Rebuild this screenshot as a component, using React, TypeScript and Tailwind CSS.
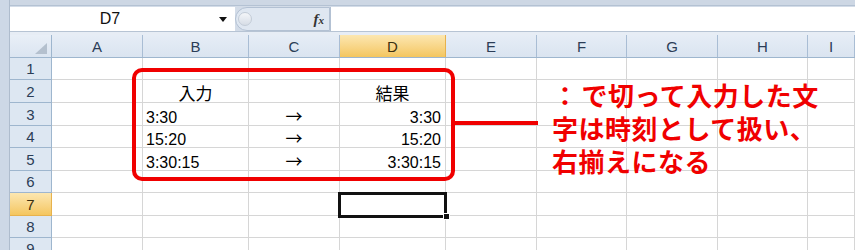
const columns = [
  { name: "A", width: "w-[91px]" },
  { name: "B", width: "w-[106px]" },
  { name: "C", width: "w-[91px]" },
  { name: "D", width: "w-[106px]" },
  { name: "E", width: "w-[91px]" },
  { name: "F", width: "w-[90px]" },
  { name: "G", width: "w-[91px]" },
  { name: "H", width: "w-[90px]" },
  { name: "I", width: "w-[47px]" },
];

const rowHeights = ["h-[22px]", "h-[23px]", "h-[23px]", "h-[22px]", "h-[23px]", "h-[22px]", "h-[23px]", "h-[22px]", "h-[22px]"];

type Cell = { text: string; align: "left" | "center" | "right"; cjk?: boolean };

const cells: Record<string, Cell> = {
  B2: { text: "入力", align: "center", cjk: true },
  D2: { text: "結果", align: "center", cjk: true },
  B3: { text: "3:30", align: "left" },
  C3: { text: "→", align: "center", cjk: true },
  D3: { text: "3:30", align: "right" },
  B4: { text: "15:20", align: "left" },
  C4: { text: "→", align: "center", cjk: true },
  D4: { text: "15:20", align: "right" },
  B5: { text: "3:30:15", align: "left" },
  C5: { text: "→", align: "center", cjk: true },
  D5: { text: "3:30:15", align: "right" },
};

const alignClass = {
  left: "justify-start pl-[3px]",
  center: "justify-center",
  right: "justify-end pr-[4px]",
};

const FormulaBar = () => (
  <div className="flex h-[25px] shrink-0 bg-[#d3dce8]">
    <div className="mt-[1px] flex h-[24px] w-[225px] items-center bg-white">
      <span className="w-[200px] text-center text-[16px] leading-none text-[#111]">D7</span>
      <svg width="8" height="5" viewBox="0 0 8 5" className="ml-[9px]">
        <polygon points="0,0 8,0 4,5" fill="#111" />
      </svg>
    </div>
    <div className="mt-[1px] flex h-[24px] w-[95px] items-center rounded-l-full border border-[#b3c1d3] bg-[#dfe7f1]">
      <div className="ml-[2px] h-[14px] w-[14px] rounded-full border border-[#c3ccd7] bg-gradient-to-b from-[#f4f6f9] to-[#d6dde6]" />
      <span className="ml-auto mr-[5px] font-['Liberation_Serif',serif] text-[15px] font-bold italic leading-none text-[#333]">
        f<span className="text-[11px]">x</span>
      </span>
    </div>
    <div className="mt-[1px] h-[24px] flex-1 border-l border-[#b3c1d3] bg-white" />
  </div>
);

const App = () => {
  return (
    <div className="relative flex h-[250px] w-[855px] overflow-hidden bg-white font-['Liberation_Sans','Noto_Sans_CJK_JP',sans-serif]">
      <div className="w-[10px] shrink-0 border-r border-[#aebccd] bg-[#cdd8e6]" />

      <div className="flex flex-1 flex-col">
        <div className="h-[6px] shrink-0 border-b border-[#b4c2d3] bg-[#cdd7e4]" />
        <FormulaBar />
        <div className="h-[4px] shrink-0 border-t border-[#b7c4d4] bg-[#e7edf5]" />

        <div className="flex h-[23px] shrink-0 border-b border-[#9eb6ce]">
          <div className="flex w-[42px] items-end justify-end border-r border-[#9eb6ce] bg-gradient-to-b from-[#e9eff7] to-[#dbe5f1] pb-[3px] pr-[4px]">
            <svg width="12" height="11" viewBox="0 0 12 11">
              <polygon points="12,0 12,11 0,11" fill="#b4c0ce" />
            </svg>
          </div>
          {columns.map((col) => (
            <div
              key={col.name}
              className={`${col.width} flex items-center justify-center border-r text-[15px] leading-none ${
                col.name === "D"
                  ? "border-[#e7b24d] bg-gradient-to-b from-[#fce7b0] to-[#f4c65e] text-[#3b2f10]"
                  : "border-[#a9bdd4] bg-gradient-to-b from-[#e6edf6] to-[#dae4f0] text-[#2b3d57]"
              }`}
            >
              {col.name}
            </div>
          ))}
        </div>

        {rowHeights.map((height, index) => {
          const row = index + 1;
          return (
            <div key={row} className={`flex ${height} shrink-0`}>
              <div
                className={`flex w-[42px] items-center justify-center border-r border-b text-[15px] leading-none ${
                  row === 7
                    ? "border-[#e7b24d] bg-gradient-to-b from-[#fce7b0] to-[#f4c65e] text-[#3b2f10]"
                    : "border-[#9eb6ce] bg-[#dde7f2] text-[#2b3d57]"
                }`}
              >
                {row}
              </div>
              {columns.map((col) => {
                const cell = cells[`${col.name}${row}`];
                return (
                  <div
                    key={col.name}
                    className={`${col.width} flex items-end border-r border-b border-[#d6d6d6] ${
                      cell ? alignClass[cell.align] : ""
                    }`}
                  >
                    {cell && (
                      <span
                        className={
                          cell.cjk
                            ? "font-['Noto_Sans_CJK_JP',sans-serif] text-[17px] leading-[19px] text-black"
                            : "text-[16px] leading-[15px] text-black"
                        }
                      >
                        {cell.text}
                      </span>
                    )}
                  </div>
                );
              })}
            </div>
          );
        })}
      </div>

      {/* annotation */}
      <div className="absolute left-[132px] top-[68px] h-[113px] w-[323px] rounded-[10px] border-4 border-[#f00000]" />
      <div className="absolute left-[455px] top-[121px] h-[4px] w-[83px] bg-[#f00000]" />
      <div className="absolute left-[552px] top-[78px] whitespace-nowrap font-['Noto_Sans_CJK_JP',sans-serif] text-[26px] font-bold leading-[33px] tracking-[0.5px] text-[#f00000]">
        <div>
          <span className="mr-[3px]">：</span>で切って入力した文
        </div>
        <div>字は時刻として扱い、</div>
        <div>右揃えになる</div>
      </div>

      {/* active cell D7 */}
      <div className="absolute left-[338px] top-[192px] h-[26px] w-[109px] border-[3px] border-[#111]" />
      <div className="absolute left-[443px] top-[213px] h-[7px] w-[7px] border border-white bg-[#111]" />
    </div>
  );
};

export default App;
